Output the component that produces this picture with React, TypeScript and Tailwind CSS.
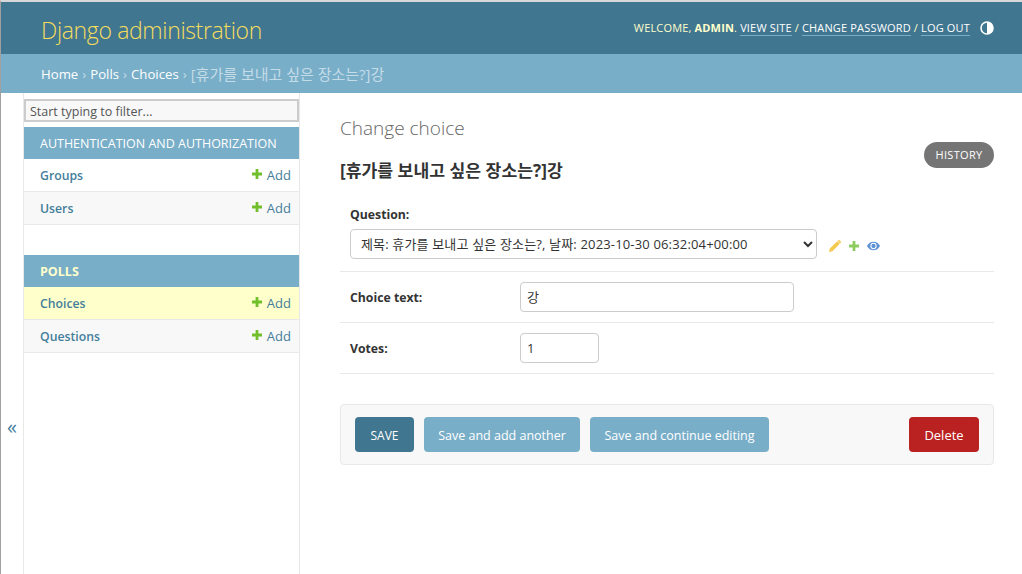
const font = "font-['Open_Sans','Noto_Sans_CJK_KR',sans-serif]";

function AddIcon({ color, className }: { color: string; className?: string }) {
  return (
    <svg viewBox="0 0 10 10" className={`size-[10px] ${className ?? ""}`} fill={color}>
      <path d="M3.6 0h2.8v3.6H10v2.8H6.4V10H3.6V6.4H0V3.6h3.6z" />
    </svg>
  );
}

function ModelRow({ name, alt, current }: { name: string; alt?: boolean; current?: boolean }) {
  return (
    <div
      className={`flex h-[33px] items-center justify-between border-b border-[#e8e8e8] pl-4 pr-2 pt-px text-[13px] ${
        current ? "bg-[#ffffcc]" : alt ? "bg-[#f8f8f8]" : "bg-white"
      }`}
    >
      <span className="pt-0.5 text-[12.25px] font-semibold text-[#447e9b]">{name}</span>
      <span className="flex items-center gap-[5px] text-[#447e9b]">
        <AddIcon color="#70bf2b" className="-mt-1" />
        Add
      </span>
    </div>
  );
}

function Caption({ label, current }: { label: string; current?: boolean }) {
  return (
    <div
      className={`flex h-8 items-center bg-[#79aec8] pl-4 pt-[3px] text-[12.5px] ${
        current ? "font-bold text-[#ffffcc]" : "font-normal text-white"
      }`}
    >
      {label}
    </div>
  );
}

export default function App() {
  return (
    <div className={`${font} flex h-[574px] flex-col overflow-hidden border-t-2 border-l border-t-[#d8d8d8] border-l-[#a0a0a0] bg-white text-[#333]`}>
      {/* Header */}
      <div className="flex h-[52px] shrink-0 items-center justify-between bg-[#417690] pl-10 pr-7">
        <span className="pt-1 text-[23px] font-light tracking-[-0.35px] text-[#f5dd5d]">Django administration</span>
        <div className="flex items-center gap-1.5 text-[11px] tracking-[0.015em] text-[#ffffcc]">
          <span>
            WELCOME, <strong className="font-bold">ADMIN</strong>.{" "}
            <a className="border-b border-[#79aec8] text-white">VIEW SITE</a> /{" "}
            <a className="border-b border-[#79aec8] text-white">CHANGE PASSWORD</a> /{" "}
            <a className="border-b border-[#79aec8] text-white">LOG OUT</a>
          </span>
          <svg viewBox="0 0 14 14" className="ml-1 size-[14px]">
            <circle cx="7" cy="7" r="6" fill="#417690" stroke="#fff" strokeWidth="1.6" />
            <path d="M7 1a6 6 0 0 1 0 12z" fill="#fff" />
          </svg>
        </div>
      </div>

      {/* Breadcrumbs */}
      <div className="flex h-[39px] shrink-0 items-center bg-[#79aec8] pl-10 pt-0.5 text-[13.2px] text-[#c4dce8]">
        <a className="text-white">Home</a>
        <span className="mx-1">›</span>
        <a className="text-white">Polls</a>
        <span className="mx-1">›</span>
        <a className="text-white">Choices</a>
        <span className="mx-1">›</span>
        <span className="text-[15px]">[휴가를 보내고 싶은 장소는?]강</span>
      </div>

      <div className="flex min-h-0 flex-1">
        {/* Sidebar toggle */}
        <div className="flex w-[23px] shrink-0 items-center justify-center border-r border-[#e8e8e8] pt-[186px] text-[20px] text-[#447e9b]">
          «
        </div>

        {/* Sidebar */}
        <div className="w-[276px] shrink-0 border-r border-[#e8e8e8] pt-1.5">
          <input
            placeholder="Start typing to filter..."
            className="mb-[5px] block h-[23px] w-full border-2 border-[#cccccc] bg-[#f8f8f8] px-1 pt-0.5 text-[12.5px] outline-none placeholder:text-[#555]"
          />
          <Caption label="AUTHENTICATION AND AUTHORIZATION" />
          <ModelRow name="Groups" />
          <ModelRow name="Users" alt />
          <div className="h-[30px]" />
          <Caption label="POLLS" current />
          <ModelRow name="Choices" current />
          <ModelRow name="Questions" alt />
        </div>

        {/* Content */}
        <div className="min-w-0 flex-1 pl-10 pr-7">
          <div className="flex items-start justify-between">
            <div>
              <h1 className="mt-[21px] text-[19px] font-light text-[#666]">Change choice</h1>
              <h2 className="mt-[16px] text-[17.2px] font-bold leading-[24px] text-[#333]">[휴가를 보내고 싶은 장소는?]강</h2>
            </div>
            <a className="mt-[49px] flex h-[26px] w-[70px] items-center justify-center rounded-full bg-[#757575] text-[11px] tracking-[0.03em] text-white">
              HISTORY
            </a>
          </div>

          <div className="mt-[20px] border-b border-[#e8e8e8] px-2.5 pb-3 pt-[3px]">
            <label className="block text-[12.25px] font-bold">Question:</label>
            <div className="mt-[5px] flex items-center gap-3">
              <select className="h-[30px] w-[467px] rounded border border-[#cccccc] bg-white pl-1.5 pt-px text-[13px] tracking-[0.16px] text-[#333]">
                <option>제목: 휴가를 보내고 싶은 장소는?, 날짜: 2023-10-30 06:32:04+00:00</option>
              </select>
              <div className="mt-[5px] flex items-center gap-[8px]">
                <svg viewBox="0 0 12 12" className="size-3" fill="#f5c94e">
                  <path d="M0 12l.8-3.4L8.2 1.2l2.6 2.6-7.4 7.4zM9 .4a1.2 1.2 0 0 1 1.7 0l.9.9a1.2 1.2 0 0 1 0 1.7l-.4.4-2.6-2.6z" />
                </svg>
                <AddIcon color="#8fcc5f" />
                <svg viewBox="0 0 14 10" className="h-[10px] w-[13px]">
                  <path d="M0 5c1.6-3 4-4.6 7-4.6S12.400 2 14 5c-1.600 3-4 4.600-7 4.600S1.600 8 0 5z" fill="#5b90d5" />
                  <circle cx="7" cy="5" r="3.400" fill="#fff" />
                  <circle cx="7" cy="5" r="2.300" fill="#5b90d5" />
                </svg>
              </div>
            </div>
          </div>

          <div className="flex h-[51px] items-center border-b border-[#e8e8e8] px-2.5">
            <label className="w-[170px] pt-0.5 text-[12.25px] font-bold">Choice text:</label>
            <input
              defaultValue="강"
              className="h-[30px] w-[274px] rounded border border-[#cccccc] px-1.5 text-[13px] text-[#333]"
            />
          </div>

          <div className="flex h-[51px] items-center border-b border-[#e8e8e8] px-2.5">
            <label className="w-[170px] pt-0.5 text-[12.25px] font-bold">Votes:</label>
            <input
              defaultValue="1"
              className="h-[30px] w-[79px] rounded border border-[#cccccc] px-1.5 text-[13px] text-[#333]"
            />
          </div>

          {/* Submit row */}
          <div className="mt-[30px] flex h-[61px] items-center gap-2.5 rounded border border-[#e8e8e8] bg-[#f8f8f8] px-3.5 text-[12.5px] text-white">
            <button className="h-[35px] w-[59px] rounded bg-[#417690] pt-[3px] text-[12px]">SAVE</button>
            <button className="h-[35px] w-[156px] rounded bg-[#79aec8] pt-[3px]">Save and add another</button>
            <button className="h-[35px] w-[179px] rounded bg-[#79aec8] pt-[3px]">Save and continue editing</button>
            <button className="ml-auto h-[35px] w-[70px] rounded bg-[#ba2121] pt-[3px] text-[13px]">Delete</button>
          </div>
        </div>
      </div>
    </div>
  );
}
